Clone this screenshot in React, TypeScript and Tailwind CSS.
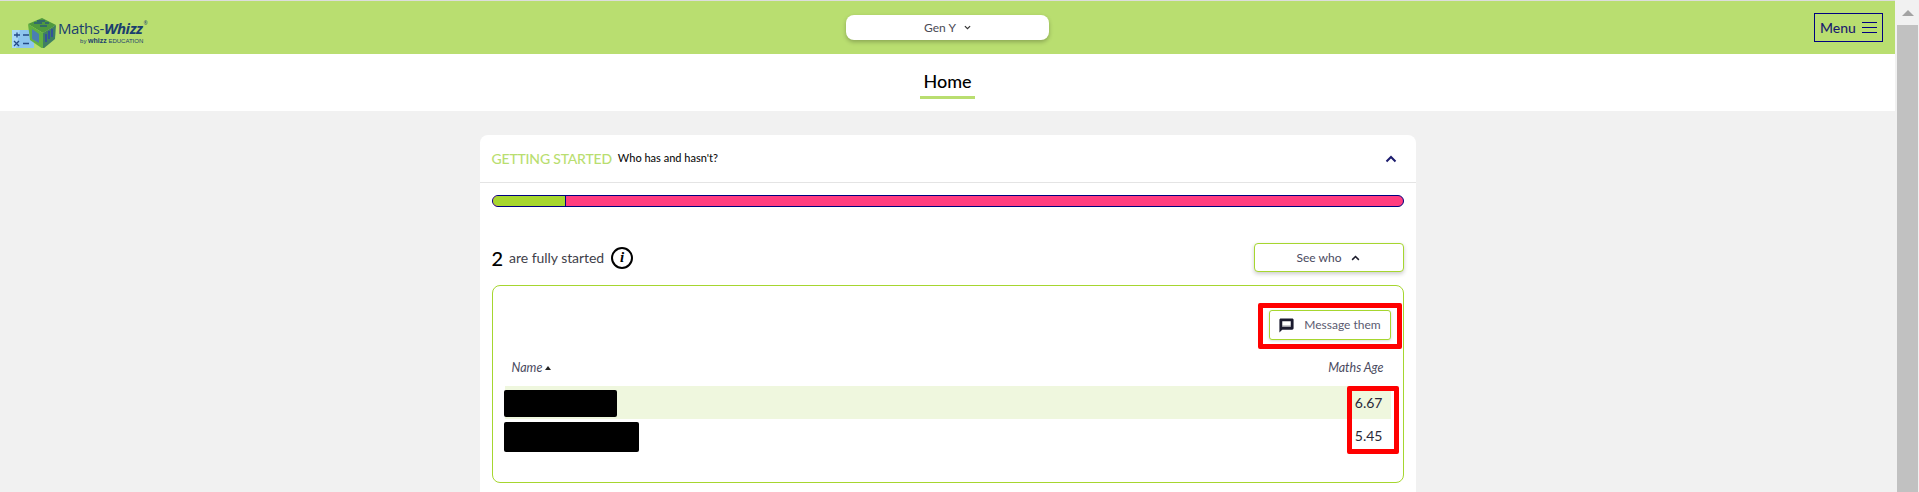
import React from "react";

function Logo() {
  return (
    <div className="flex items-center">
      <svg width="45" height="40" viewBox="0 0 45 40" className="shrink-0">
        <path d="M0 22 L22 22 L22 40 L0 40 Z" fill="#8cc4ee" />
        <path d="M0 22 L8 22 L4 40 L0 40 Z" fill="#a9d8f5" />
        <path d="M2 27 h6 M5 24.500 v5 M11 27 h6 M2 33 l5 5 M7 33 l-5 5 M11 35.500 h6" stroke="#244a86" strokeWidth="1.300" />
        <path d="M16 16 L30 10 L44 17 L31 25 Z" fill="#4f9a3e" />
        <path d="M16 16 L31 25 L31 41 L18 32 Z" fill="#63b13f" />
        <path d="M31 25 L44 17 L43 31 L31 41 Z" fill="#3f7f62" />
        <path d="M22 15 h8 M25 13 h8 M28 18 h7 M33 15 h4" stroke="#2b5d78" strokeWidth="1.600" />
        <path d="M34 34 V26 M37 31 V23 M40 29 V21" stroke="#34529a" strokeWidth="2" />
        <path d="M20 21 L27 26 L27 35 L20 31 Z" fill="#4a7fb0" />
      </svg>
      <div className="ml-[1px] mt-[8px] flex flex-col items-end text-[#1b3f6e]">
        <div className="flex items-start whitespace-nowrap font-['Open_Sans',sans-serif] text-[15px] leading-[18px] tracking-[-0.4px]">
          <span>Maths-</span>
          <span className="pr-[1px] font-bold italic">Whizz</span>
          <span className="text-[5px] leading-[8px]">®</span>
        </div>
        <div className="mr-1 font-['Liberation_Sans',sans-serif] text-[6px] leading-[8px]">
          by <span className="text-[7px] font-bold">whizz</span> EDUCATION
        </div>
      </div>
    </div>
  );
}

function Chevron({ className }: { className: string }) {
  return (
    <svg viewBox="0 0 12 8" className={className} fill="none" stroke="currentColor" strokeWidth="2">
      <path d="M1.500 6.500 L6 2 L10.500 6.500" />
    </svg>
  );
}

export default function App() {
  return (
    <div className="flex h-[492px] w-full overflow-hidden bg-[#f1f1f1] font-['Lato',sans-serif]">
      <div className="flex min-w-0 flex-1 flex-col">
        <header className="grid h-[54px] shrink-0 grid-cols-3 items-center border-t border-[#dddddd] bg-[#b9de70]">
          <div className="pl-[12px]">
            <Logo />
          </div>
          <div className="flex justify-center">
            <div className="flex h-[25px] w-[203px] items-center justify-center gap-2 rounded-lg bg-white text-[12px] text-[#4a4a55] shadow-[0_2px_4px_rgba(0,0,0,0.25)]">
              <span>Gen Y</span>
              <Chevron className="h-[5px] w-[7px] rotate-180 text-[#333]" />
            </div>
          </div>
          <div className="flex justify-end pr-3">
            <div className="flex h-[29px] w-[69px] items-center justify-center gap-[6px] border border-[#000080] text-[14px] font-medium text-[#1c1c6e]">
              <span>Menu</span>
              <div className="flex w-[15px] flex-col gap-[4px]">
                <div className="h-px bg-[#000080]" />
                <div className="h-px bg-[#000080]" />
                <div className="h-px bg-[#000080]" />
              </div>
            </div>
          </div>
        </header>

        <div className="flex h-[57px] shrink-0 justify-center bg-white">
          <div className="mt-[15px] h-[30px] w-[55px] border-b-[3px] border-[#b9de70] text-center text-[18px] font-medium leading-[24px] text-black">
            Home
          </div>
        </div>

        <main className="flex min-h-0 flex-1 justify-center pt-6">
          <section className="h-[500px] w-[936px] shrink-0 rounded-t-lg bg-white">
            <div className="flex h-[48px] items-center justify-between border-b border-[#e4e4e4] pl-3 pr-[19px]">
              <div className="flex items-center gap-[6px]">
                <span className="text-[14px] font-medium tracking-[-0.2px] text-[#b9de70]">GETTING STARTED</span>
                <span className="text-[11px] font-medium text-[#111]">Who has and hasn't?</span>
              </div>
              <Chevron className="h-[8px] w-[12px] text-[#1c1c6e]" />
            </div>

            <div className="px-3 pt-3">
              <div className="flex h-3 overflow-hidden rounded-full border border-[#000080] bg-[#ff3d7f]">
                <div className="w-[73px] border-r border-[#000080] bg-[#a6d62f]" />
              </div>

              <div className="mt-9 flex h-[29px] items-center justify-between">
                <div className="flex items-center text-[#3f3f4a]">
                  <span className="text-[20px] font-medium leading-none text-black">2</span>
                  <span className="ml-[6px] text-[14px] tracking-[-0.05px]">are fully started</span>
                  <span className="ml-[7px] flex h-[22px] w-[22px] items-center justify-center rounded-full border-2 border-black font-['Liberation_Serif',serif] text-[15px] font-bold italic leading-none text-black">
                    i
                  </span>
                </div>
                <div className="flex h-[29px] w-[150px] items-center justify-center gap-[10px] rounded border border-[#a6d62f] bg-white text-[12px] text-[#4a4a60] shadow-[0_2px_4px_rgba(0,0,0,0.2)]">
                  <span>See who</span>
                  <Chevron className="h-[6px] w-[9px] text-[#1a1a2a]" />
                </div>
              </div>

              <div className="relative mt-[13px] h-[198px] rounded-lg border border-[#a6d62f] px-[12px] pt-6">
                <div className="flex justify-end">
                  <div className="flex h-[30px] w-[122px] items-center justify-center gap-[9px] rounded-[3px] border border-[#a6d62f] bg-white text-[12px] text-[#5a5a70] shadow-[0_1px_3px_rgba(0,0,0,0.15)]">
                    <svg viewBox="0 0 24 24" className="h-[17px] w-[17px] fill-[#1a1a2e]">
                      <path d="M20 2H4c-1.100 0-2 .9-2 2v18l4-4h14c1.100 0 2-.9 2-2V4c0-1.100-.9-2-2-2zM6 6h12v8H6z" fillRule="evenodd" />
                      <path d="M6 12h12v2H6z" opacity="0.45" />
                    </svg>
                    <span>Message them</span>
                  </div>
                </div>

                <div className="mt-[19px] flex items-center justify-between px-[7px] text-[12.5px] italic text-[#4a4a60]">
                  <div className="flex items-center gap-[3px]">
                    <span>Name</span>
                    <span className="h-0 w-0 border-x-[3.5px] border-b-[4px] border-x-transparent border-b-[#222]" />
                  </div>
                  <span>Maths Age</span>
                </div>

                <div className="mt-[8px] text-[14px] text-[#2a2a3a]">
                  <div className="flex h-[33px] items-center justify-end bg-[#eff7de] pr-[8px]">
                    <span>6.67</span>
                  </div>
                  <div className="flex h-[34px] items-center justify-end pr-[8px]">
                    <span>5.45</span>
                  </div>
                </div>

                <div className="absolute left-[11px] top-[104px] h-[27px] w-[113px] rounded-[2px] bg-black" />
                <div className="absolute left-[11px] top-[136px] h-[30px] w-[135px] rounded-[2px] bg-black" />
                <div className="absolute right-[1px] top-[17px] h-[46px] w-[144px] rounded-[2px] border-[5px] border-[#ff0000]" />
                <div className="absolute right-[4px] top-[100px] h-[68px] w-[52px] rounded-[2px] border-[5px] border-[#ff0000]" />
              </div>
            </div>
          </section>
        </main>
      </div>

      <aside className="flex w-6 shrink-0 flex-col bg-[#f1f1f1] pl-[2px] pr-px">
        <div className="flex h-[25px] items-center justify-center">
          <div className="h-0 w-0 border-x-[6px] border-b-[6px] border-x-transparent border-b-[#a3a3a3]" />
        </div>
        <div className="flex-1 bg-[#c1c1c1]" />
      </aside>
    </div>
  );
}
